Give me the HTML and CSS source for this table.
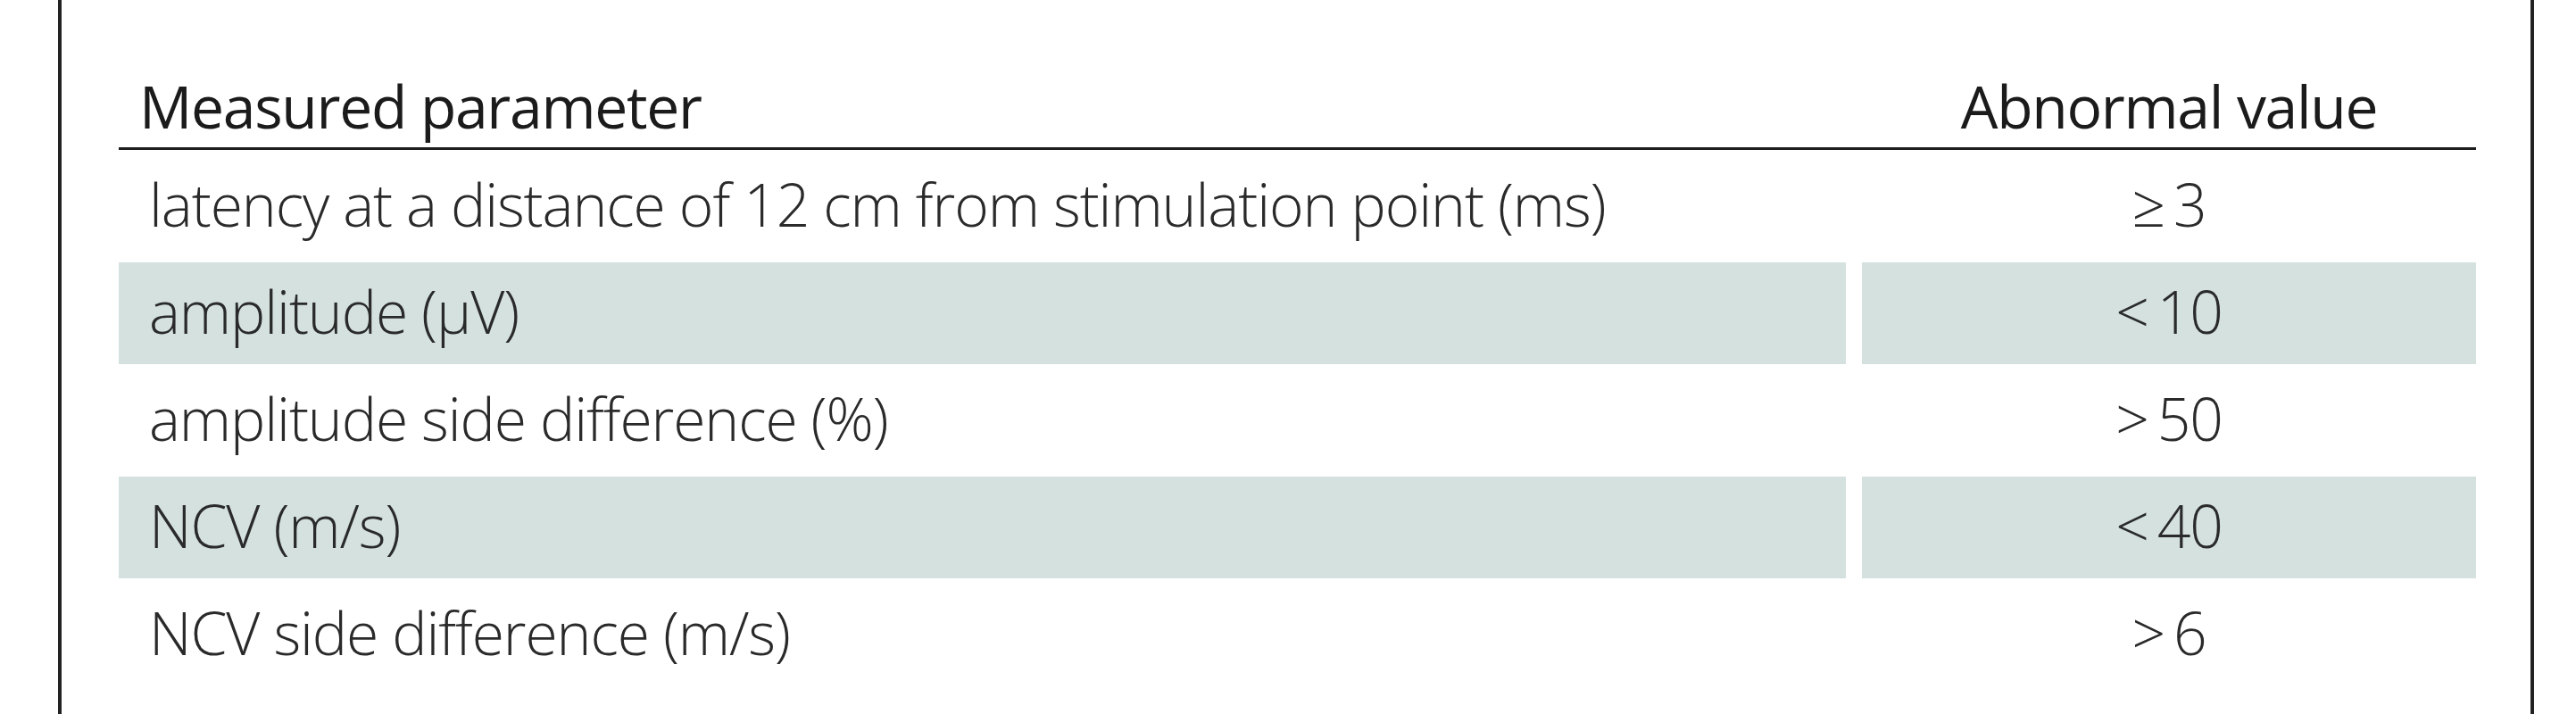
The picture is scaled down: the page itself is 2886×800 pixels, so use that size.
FILE: index.html
```html
<!DOCTYPE html>
<html lang="en">
<head>
<meta charset="utf-8">
<title>Abnormal values</title>
<link rel="stylesheet" href="styles.css">
</head>
<body>
<div class="frame">
  <div class="table">
    <div class="head">
      <div class="th param">Measured parameter</div>
      <div class="th value">Abnormal value</div>
    </div>
    <div class="rows">
      <div class="row">
        <div class="cell param">latency at a distance of 12 cm from stimulation point (ms)</div>
        <div class="cell value">≥&#8201;3</div>
      </div>
      <div class="row shaded">
        <div class="cell param">amplitude (µV)</div>
        <div class="cell value">&lt;&#8201;10</div>
      </div>
      <div class="row">
        <div class="cell param">amplitude side difference (%)</div>
        <div class="cell value">&gt;&#8201;50</div>
      </div>
      <div class="row shaded">
        <div class="cell param">NCV (m/s)</div>
        <div class="cell value">&lt;&#8201;40</div>
      </div>
      <div class="row">
        <div class="cell param">NCV side difference (m/s)</div>
        <div class="cell value">&gt;&#8201;6</div>
      </div>
    </div>
  </div>
</div>
</body>
</html>
```
FILE: styles.css
```css
html, body {
  margin: 0;
  padding: 0;
  background: #ffffff;
}

body {
  font-family: "Open Sans", "Noto Sans", "Liberation Sans", sans-serif;
  color: #2a2a2a;
}

.frame {
  margin-left: 65px;
  width: 2774px;
  height: 800px;
  border-left: 4px solid #222222;
  border-right: 4px solid #222222;
  padding: 0 61px 0 64px;
  box-sizing: border-box;
}

.table {
  width: 2641px;
}

.head,
.row {
  display: grid;
  grid-template-columns: 1935px 688px;
  column-gap: 18px;
}

.head {
  padding-top: 73px;
  padding-bottom: 2px;
  border-bottom: 3px solid #1c1c1c;
}

.th {
  font-size: 66px;
  font-weight: 400;
  line-height: 90px;
  letter-spacing: -1.3px;
  color: #1b1b1b;
  white-space: nowrap;
}

.th.param {
  padding-left: 23px;
}

.rows {
  display: flex;
  flex-direction: column;
  gap: 6px;
  padding-top: 6px;
}

.cell {
  font-size: 66px;
  font-weight: 300;
  line-height: 108px;
  padding-bottom: 6px;
  letter-spacing: -1.1px;
  white-space: nowrap;
}

.cell.param {
  padding-left: 34px;
}

.value {
  text-align: center;
}

.shaded .cell {
  background: #d4e1df;
}
```
